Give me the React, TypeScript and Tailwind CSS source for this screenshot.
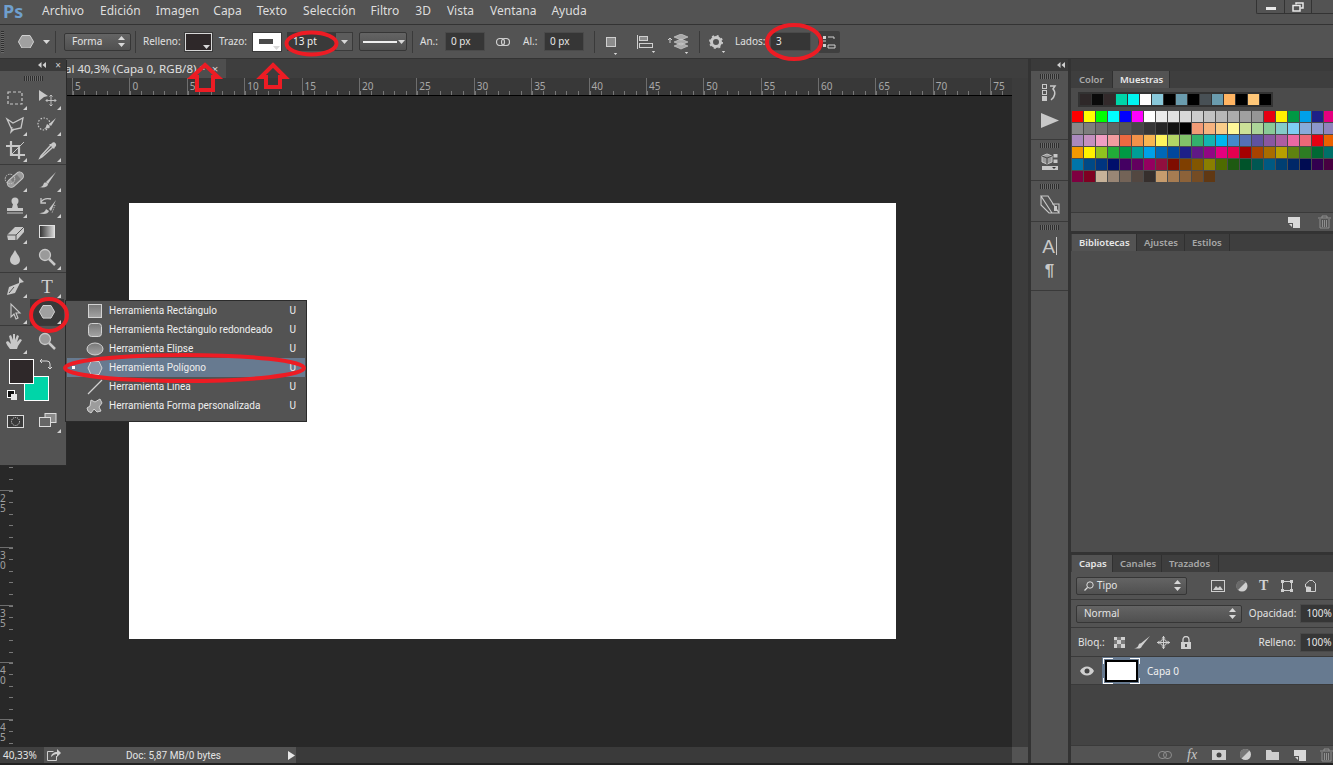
import React from 'react';

const menus = [
  ['Archivo', 'ml-[18px]'],
  ['Edición', 'ml-[16px]'],
  ['Imagen', 'ml-[15px]'],
  ['Capa', 'ml-[14px]'],
  ['Texto', 'ml-[15px]'],
  ['Selección', 'ml-[16px]'],
  ['Filtro', 'ml-[15px]'],
  ['3D', 'ml-[16px]'],
  ['Vista', 'ml-[16px]'],
  ['Ventana', 'ml-[16px]'],
  ['Ayuda', 'ml-[15px]'],
];

const recent = ['#2e2829', '#0a0a0a', '#332a2b', '#00d5a8', '#00f5f0', '#ffffff', '#88c8da', '#000000', '#6a9cae', '#000000', '#485055', '#6a9cae', '#ffb462', '#000000', '#ffc778', '#000000'];

const swatches = [
  ['#ff0000', '#ffff00', '#00ff00', '#00ffff', '#0000ff', '#ff00ff', '#ffffff', '#ebebeb', '#e1e1e1', '#d7d7d7', '#cccccc', '#c2c2c2', '#b7b7b7', '#acacac', '#a0a0a0', '#959595', '#e60012', '#fff100', '#009944', '#00a0e9', '#1d2088', '#e4007f'],
  ['#898989', '#7d7d7d', '#707070', '#626262', '#555555', '#464646', '#363636', '#262626', '#111111', '#000000', '#f29b76', '#f6b37f', '#facd89', '#fff799', '#cce198', '#acd598', '#89c997', '#84ccc9', '#7ecef4', '#88abda', '#8c97cb', '#8f82bc'],
  ['#aa89bd', '#c490bf', '#f19ec2', '#f29c9f', '#ec6941', '#f19149', '#f8b551', '#fff45c', '#b3d465', '#80c269', '#32b16c', '#13b5b1', '#00b7ee', '#448aca', '#556fb5', '#5f52a0', '#8957a1', '#ae5da1', '#ea68a2', '#eb6877', '#e60012', '#eb6100'],
  ['#f39800', '#fff100', '#8fc31f', '#22ac38', '#009944', '#009e96', '#00a0e9', '#0068b7', '#00479d', '#1d2088', '#601986', '#920783', '#e4007f', '#e5004f', '#a40000', '#a84200', '#a86c00', '#b8a000', '#5f8210', '#2d7d23', '#006934', '#007069'],
  ['#0075a9', '#004986', '#003580', '#000f6b', '#440062', '#63005f', '#950060', '#910f3e', '#7f0d00', '#7f3f00', '#825600', '#897f00', '#4e6b00', '#1e5a12', '#00532a', '#005752', '#005982', '#003f72', '#002868', '#000c52', '#32004f', '#470040'],
  ['#7e0040', '#7f0021', '#c7b299', '#998675', '#736357', '#534741', '#362f2d', '#c69c6d', '#a67c52', '#8c6239', '#754c24', '#603813'],
];

const rulerLabels = ['5', '0', '5', '10', '15', '20', '25', '30', '35', '40', '45', '50', '55', '60', '65', '70', '75'];
// the upper part of the side ruler lies under the toolbar, so it has no labels
const sideLabels = ['', '', '', '', '', '', '', '2\n5', '3\n0', '3\n5', '4\n0', '4\n5'];

const flyout = [
  ['Herramienta Rectángulo', 'rect'],
  ['Herramienta Rectángulo redondeado', 'round'],
  ['Herramienta Elipse', 'ellipse'],
  ['Herramienta Polígono', 'poly'],
  ['Herramienta Línea', 'line'],
  ['Herramienta Forma personalizada', 'custom'],
];

const Ico = ({ w = 22, h = 22, children, className = '' }: { w?: number; h?: number; children: React.ReactNode; className?: string }) => (
  <svg width={w} height={h} viewBox={`0 0 ${w} ${h}`} fill="none" className={`shrink-0 ${className}`}>
    {children}
  </svg>
);

const Caret = ({ className = '' }: { className?: string }) => (
  <svg width="7" height="4" viewBox="0 0 7 4" className={`shrink-0 ${className}`}>
    <path d="M0 0h7L3.5 4z" fill="#d8d8d8" />
  </svg>
);

const UpDown = () => (
  <svg width="7" height="11" viewBox="0 0 7 11" className="shrink-0">
    <path d="M3.5 0L7 4H0zM3.5 11L0 7h7z" fill="#d8d8d8" />
  </svg>
);

const Grip = ({ w }: { w: string }) => (
  <div className={`h-[5px] ${w} bg-[repeating-linear-gradient(to_right,#2e2e2e_0,#2e2e2e_1px,#6a6a6a_1px,#6a6a6a_2px)]`} />
);

const Collapse = () => (
  <svg width="8" height="6" viewBox="0 0 8 6">
    <path d="M3.5 0v6L0 3zM8 0v6L4.5 3z" fill="#d0d0d0" />
  </svg>
);

const Hex = ({ s = 16 }: { s?: number }) => (
  <svg width={s} height={s * 0.85} viewBox="0 0 16 13.6" className="shrink-0">
    <path d="M4 .5h8l3.6 6.3L12 13.1H4L.4 6.8z" fill="#a0a0a0" stroke="#d2d2d2" />
  </svg>
);

const Select = ({ label, className }: { label: React.ReactNode; className: string }) => (
  <div className={`flex items-center justify-between rounded-[2px] border border-[#363636] bg-gradient-to-b from-[#646464] to-[#505050] pl-[7px] pr-[5px] text-[#e4e4e4] ${className}`}>
    <span className="flex items-center gap-[3px]">{label}</span>
    <UpDown />
  </div>
);

const Input = ({ value, className }: { value: string; className: string }) => (
  <div className={`flex h-[19px] items-center border border-[#4a4a4a] bg-[#363636] pl-[5px] text-[#e6e6e6] ${className}`}>{value}</div>
);

const ToolCell = ({ children, more = true, active = false }: { children: React.ReactNode; more?: boolean; active?: boolean }) => (
  <div className={`relative flex h-[26px] items-center justify-center ${active ? 'bg-[#383838]' : ''}`}>
    {children}
    {more && <span className="absolute bottom-[1px] right-[3px] h-0 w-0 border-b-[4px] border-l-[4px] border-b-[#cfcfcf] border-l-transparent" />}
  </div>
);

const c = '#c8c8c8';
const cols = 'grid grid-cols-[30px_34px]';

const Toolbar = () => (
  <div className="absolute left-0 top-[59px] flex h-[406px] w-[66px] flex-col bg-[#535353] shadow-[1px_1px_0_#2a2a2a]">
    <div className="flex h-[12px] items-center justify-end gap-[9px] bg-[#3a3a3a] pr-[5px]">
      <Collapse />
      <span className="text-[10px] leading-none text-[#d0d0d0]">×</span>
    </div>
    <div className="flex h-[14px] items-center justify-center">
      <Grip w="w-[19px]" />
    </div>
    <div className={`${cols} border-b border-[#3a3a3a] pb-[1px]`}>
      <ToolCell><Ico><rect x="4" y="5" width="14" height="12" stroke={c} strokeWidth="1.2" strokeDasharray="3 2" /></Ico></ToolCell>
      <ToolCell><Ico><path d="M3 3l9 6-4 1-5 4z" fill={c} /><path d="M15 8v11M10 13.5h10M13.5 9.5L15 8l1.5 1.5M13.5 17.5L15 19l1.5-1.5M11.5 12L10 13.5l1.5 1.5M18.5 12l1.500 1.500-1.500 1.500" stroke={c} strokeWidth="0.9" /></Ico></ToolCell>
      <ToolCell><Ico><path d="M3 6l6 4 10-5-2 10-9 2-5-11z" stroke={c} strokeWidth="1.3" /><path d="M8 14l-1 5 3-3" stroke={c} strokeWidth="1.3" /></Ico></ToolCell>
      <ToolCell><Ico><circle cx="8" cy="11" r="6" stroke={c} strokeWidth="1.2" strokeDasharray="1.500 1.500" /><path d="M20 5l-7 6 2 2z" fill={c} /><path d="M8 16c3 0 5-1 6-3l-3-2c-1 2-1 4-3 5z" fill={c} /></Ico></ToolCell>
      <ToolCell><Ico><path d="M7 2v14h14M2 7h13v13" stroke={c} strokeWidth="2.200" /><path d="M8 15L20 3" stroke={c} strokeWidth="1" /></Ico></ToolCell>
      <ToolCell><Ico><path d="M15 6l-10 11-1 2 2-1L17 8" stroke={c} strokeWidth="1.500" /><path d="M13 5l5 5 1-2 1-1c1-2-2-5-4-3l-1 1z" fill={c} /></Ico></ToolCell>
    </div>
    <div className={`${cols} pt-[2px]`}>
      <ToolCell><Ico><g transform="rotate(-42 11 11)"><rect x="2" y="7" width="19" height="8" rx="4" fill="#9a9a9a" stroke={c} /><rect x="8" y="8" width="8" height="6" fill="#7a7a7a" /></g><circle cx="6" cy="10" r="4.800" stroke={c} strokeDasharray="1.500 1" /></Ico></ToolCell>
      <ToolCell><Ico><path d="M20 3L10 13l2 2z" fill={c} /><path d="M3 18c4 0 4-2 5-4 2-1 3 0 4 1 0 3-4 4-9 3z" fill={c} /></Ico></ToolCell>
      <ToolCell><Ico><circle cx="11" cy="6" r="3.500" fill={c} /><path d="M9 9h4l1 4H8z" fill={c} /><path d="M3 13h16v3H3z" fill={c} /><path d="M3 18h16" stroke={c} /></Ico></ToolCell>
      <ToolCell><Ico><path d="M5 7c2-3 6-4 10-3" stroke={c} strokeWidth="1.300" /><path d="M5 3v5h5" stroke={c} strokeWidth="1.300" /><path d="M20 5l-7 9 2 2z" fill={c} /><path d="M3 18c4 0 6-1 7-4l3 2c-1 3-5 4-10 2z" fill={c} /><path d="M19 10l-3 8" stroke={c} strokeDasharray="1 1" /></Ico></ToolCell>
      <ToolCell><Ico><path d="M3 14l8-8h9v5l-7 8H4z" fill={c} /><path d="M3 14h9l8-8M12 14v5" stroke="#535353" /></Ico></ToolCell>
      <ToolCell more={false}><Ico><defs><linearGradient id="tg"><stop offset="0" stopColor="#2e2e2e" /><stop offset="1" stopColor="#dcdcdc" /></linearGradient></defs><rect x="3.500" y="4.500" width="15" height="12" fill="url(#tg)" stroke="#e0e0e0" /></Ico></ToolCell>
      <ToolCell><Ico><path d="M11 3c2 4 5 7 5 10a5 5 0 01-10 0c0-3 3-6 5-10z" fill={c} /></Ico></ToolCell>
      <ToolCell><Ico><circle cx="9" cy="8" r="5.500" fill="#9a9a9a" stroke={c} strokeWidth="1.300" /><path d="M13 12l6 6" stroke={c} strokeWidth="2.500" /></Ico></ToolCell>
    </div>
    <div className="mt-[1px] border-t border-[#3a3a3a]">
      <div className={`${cols} border-b border-[#3a3a3a]`}>
        <ToolCell><Ico><path d="M15 2l5 5-4 1-5 10-8 2 2-8L15 8z" fill={c} /><path d="M5 18l5-6" stroke="#535353" /></Ico></ToolCell>
        <ToolCell><span className="font-['Liberation_Serif',serif] text-[19px] leading-none text-[#d2d2d2]">T</span></ToolCell>
        <ToolCell><Ico><path d="M7 3v13l3-3 2 5 2-1-2-5h4z" fill="#535353" stroke={c} strokeWidth="1.100" /></Ico></ToolCell>
        <ToolCell active><Hex /></ToolCell>
      </div>
      <div className={`${cols} pt-[3px]`}>
        <ToolCell><Ico><path d="M6 18c-2-3-4-5-4-7l2-1 3 3-2-8 2-1 2 5V3h2v6l2-5 2 1-2 6 3-3 2 1-4 6-1 3z" fill={c} /></Ico></ToolCell>
        <ToolCell more={false}><Ico><circle cx="9" cy="8" r="5.500" fill="#9a9a9a" stroke={c} strokeWidth="1.300" /><path d="M13 12l6 6" stroke={c} strokeWidth="2.500" /></Ico></ToolCell>
      </div>
    </div>
    <div className="relative h-[51px]">
      <div className="absolute left-[24px] top-[21px] h-[25px] w-[25px] border border-white bg-[#00d5a8]" />
      <div className="absolute left-[9px] top-[4px] h-[25px] w-[25px] border border-white bg-[#2e2829]" />
      <svg width="13" height="13" viewBox="0 0 13 13" className="absolute left-[39px] top-[3px]">
        <path d="M1 3h7a3 3 0 013 3v5M3 1L1 3l2 2M9 9l2 2 2-2" stroke="#d8d8d8" fill="none" />
      </svg>
      <div className="absolute left-[8px] top-[36px] h-[6px] w-[6px] bg-[#111] outline outline-1 outline-white" />
      <div className="absolute left-[11px] top-[39px] h-[6px] w-[6px] bg-[#e8e8e8]" />
    </div>
    <div className={`${cols} pt-[2px]`}>
      <ToolCell more={false}><Ico><rect x="3.500" y="5.500" width="16" height="12" fill="#3a3a3a" stroke="#dcdcdc" /><circle cx="11.500" cy="11.500" r="4" stroke="#e8e8e8" strokeDasharray="1 1" /></Ico></ToolCell>
      <ToolCell><Ico><rect x="9" y="3.500" width="11" height="9" fill="#8a8a8a" stroke="#dcdcdc" /><rect x="3.500" y="7.500" width="11" height="9" fill="#666" stroke="#dcdcdc" /></Ico></ToolCell>
    </div>
  </div>
);

const ShapeIcon = ({ kind }: { kind: string }) => (
  <Ico w={18} h={18}>
    <defs><linearGradient id={`f${kind}`} x2="0" y2="1"><stop offset="0" stopColor="#777" /><stop offset="1" stopColor="#a4a4a4" /></linearGradient></defs>
    {kind === 'rect' && <rect x="2.500" y="2.500" width="13" height="13" fill={`url(#f${kind})`} stroke="#d2d2d2" />}
    {kind === 'round' && <rect x="2.500" y="2.500" width="13" height="13" rx="3" fill={`url(#f${kind})`} stroke="#d2d2d2" />}
    {kind === 'ellipse' && <ellipse cx="9" cy="9" rx="8" ry="6" fill={`url(#f${kind})`} stroke="#d2d2d2" />}
    {kind === 'poly' && <path d="M5 2.500h8L16 9l-3 6.500H5L2 9z" fill="#8a97a8" stroke="#d2d2d2" />}
    {kind === 'line' && <path d="M2 16L16 2" stroke="#d2d2d2" strokeWidth="1.300" />}
    {kind === 'custom' && <path d="M1 11l3-2 1-6 4 2 5-3 2 4-3 4 2 4-4 1-3-3-3 4-3-2z" fill="#9c9c9c" stroke="#d2d2d2" />}
  </Ico>
);

const Flyout = () => (
  <div className="absolute left-[65px] top-[300px] flex h-[122px] w-[242px] flex-col border border-[#2b2b2b] bg-[#535353] font-['Roboto',sans-serif]">
    {flyout.map(([label, kind]) => (
      <div key={kind} className={`flex h-[19px] items-center text-[10px] text-[#eeeeee] ${kind === 'poly' ? 'mx-[1px] bg-[#677a90]' : 'mx-[1px]'}`}>
        <span className="flex w-[8px] justify-end">{kind === 'poly' && <span className="h-[3px] w-[3px] bg-white" />}</span>
        <span className="ml-[11px] w-[20px]"><ShapeIcon kind={kind} /></span>
        <span className="ml-[3px] flex-1 whitespace-nowrap">{label}</span>
        <span className="mr-[9px]">U</span>
      </div>
    ))}
  </div>
);

const Marks = () => (
  <svg width="1333" height="765" viewBox="0 0 1333 765" fill="none" className="pointer-events-none absolute left-0 top-0">
    <g stroke="#ed1c24" strokeWidth="4">
      <ellipse cx="49" cy="315" rx="18" ry="16" />
      <ellipse cx="184.500" cy="368" rx="119.500" ry="13" />
      <ellipse cx="311.500" cy="43.500" rx="25" ry="11" />
      <ellipse cx="794" cy="42" rx="27" ry="17" />
      <path d="M205 65l13 12h-5v13h-16V77h-5z" />
      <path d="M273 65l12 12h-5v10h-14V77h-5z" />
    </g>
  </svg>
);

const DockGroup = ({ children, className }: { children: React.ReactNode; className: string }) => (
  <div className={`flex flex-col items-center border-b border-[#3a3a3a] pt-[3px] ${className}`}>
    <Grip w="w-[19px]" />
    {children}
  </div>
);

const Dock = () => (
  <div className="flex w-[43px] shrink-0 border-x-[3px] border-[#333333] bg-[#535353]">
    <div className="flex w-full flex-col">
      <div className="flex h-[12px] items-center justify-center bg-[#3a3a3a] pl-[22px]"><Collapse /></div>
      <DockGroup className="h-[69px]">
        <Ico w={20} h={20} className="mt-[4px]">
          <rect x="2.500" y="1.500" width="4" height="4" stroke={c} /><rect x="2.500" y="7.500" width="4" height="4" stroke={c} /><rect x="2" y="13" width="5" height="5" fill={c} />
          <path d="M10 3h5l-2 3c3 3 2 8-2 11" stroke={c} strokeWidth="1.500" />
        </Ico>
        <svg width="18" height="15" viewBox="0 0 18 15" className="mt-[10px]"><path d="M0 0l18 7.500L0 15z" fill={c} /></svg>
      </DockGroup>
      <DockGroup className="h-[41px]">
        <Ico w={20} h={20} className="mt-[4px]">
          <path d="M7 2l5 2v6l-5 2-5-2V4z" fill="#9a9a9a" stroke={c} /><path d="M7 6v6M2 4l5 2 5-2" stroke="#444" />
          <rect x="13.500" y="2" width="4" height="3.500" fill={c} /><rect x="13.500" y="7.500" width="4" height="3.500" fill={c} />
          <rect x="2" y="14" width="16" height="4" fill={c} /><path d="M12 15h4l-2 2z" fill="#333" />
        </Ico>
      </DockGroup>
      <DockGroup className="h-[41px]">
        <Ico w={20} h={20} className="mt-[6px]">
          <path d="M1 1h7l11 17h-7zM1 1v9l8 8h3M12 9h7v9" stroke={c} strokeWidth="1.100" />
          <rect x="14" y="11" width="3" height="5" fill={c} />
        </Ico>
      </DockGroup>
      <DockGroup className="h-[69px]">
        <div className="mt-[6px] flex h-[20px] items-center font-['Liberation_Sans',sans-serif] text-[19px] leading-none text-[#c8c8c8]">A<span className="ml-[1px] h-[18px] w-px bg-[#c8c8c8]" /></div>
        <div className="mt-[6px] font-['Liberation_Sans',sans-serif] text-[17px] font-bold leading-none text-[#c8c8c8]">¶</div>
      </DockGroup>
    </div>
  </div>
);

const Tab = ({ label, active = false, className = '' }: { label: string; active?: boolean; className?: string }) => (
  <div className={`flex h-[17px] items-center border-r border-[#303030] pt-[1px] text-[9.5px] font-semibold ${active ? 'bg-[#535353] text-[#e8e8e8]' : 'text-[#a8a8a8]'} ${className}`}>{label}</div>
);

const PanelFooterNew = () => (
  <Ico w={12} h={12}><path d="M0 1h12v11H5V7H0z" fill="#d8d8d8" /><path d="M1 8h3v3z" fill="#d8d8d8" /></Ico>
);

const Trash = () => (
  <Ico w={13} h={14}>
    <path d="M0 3h13M4 3V1h5v2M2 4v9h9V4M4.500 5v7M6.500 5v7M8.500 5v7" stroke="#8e8e8e" />
  </Ico>
);

const Panels = () => (
  <div className="flex min-w-0 flex-1 flex-col bg-[#333333] text-[10px]">
    <div className="h-[12px] shrink-0 bg-[#3a3a3a]" />
    <div className="flex h-[160px] shrink-0 flex-col bg-[#4b4b4b]">
      <div className="flex h-[17px] shrink-0 bg-[#3e3e3e] pl-[1px]">
        <Tab label="Color" className="w-[41px] pl-[7px]" />
        <Tab label="Muestras" active className="w-[57px] pl-[7px]" />
      </div>
      <div className="ml-[7px] mt-[4px] flex h-[15px] w-[195px] items-center gap-px bg-[#333333] px-[2px]">
        {recent.map((col, i) => <div key={i} className="h-[11px] w-[11px]" style={{ backgroundColor: col }} />)}
      </div>
      <div className="mt-[4px] flex flex-col gap-px pl-[1px]">
        {swatches.map((row, r) => (
          <div key={r} className="flex gap-px">
            {row.map((col, i) => <div key={i} className="h-[11px] w-[11px] shrink-0" style={{ backgroundColor: col }} />)}
          </div>
        ))}
      </div>
      <div className="mt-auto flex h-[19px] items-center justify-end gap-[18px] border-t border-[#3a3a3a] bg-[#535353] pr-[2px]">
        <PanelFooterNew />
        <Trash />
      </div>
    </div>
    <div className="mt-[3px] flex h-[318px] shrink-0 flex-col bg-[#4d4d4d]">
      <div className="flex h-[17px] shrink-0 bg-[#3e3e3e] pl-[1px]">
        <Tab label="Bibliotecas" active className="w-[65px] pl-[7px]" />
        <Tab label="Ajustes" className="w-[48px] pl-[7px]" />
        <Tab label="Estilos" className="w-[45px] pl-[7px]" />
      </div>
    </div>
    <div className="mt-[3px] flex flex-1 flex-col bg-[#535353] text-[#e4e4e4]">
      <div className="flex h-[17px] shrink-0 bg-[#3e3e3e] pl-[1px]">
        <Tab label="Capas" active className="w-[41px] pl-[7px]" />
        <Tab label="Canales" className="w-[49px] pl-[7px]" />
        <Tab label="Trazados" className="w-[57px] pl-[7px]" />
      </div>
      <div className="flex h-[28px] items-center border-b border-[#3a3a3a] pl-[5px]">
        <Select className="h-[18px] w-[111px]" label={<><svg width="10" height="10" viewBox="0 0 10 10" fill="none"><circle cx="6" cy="4" r="3.200" stroke="#dcdcdc" /><path d="M3.500 6.500L.5 9.500" stroke="#dcdcdc" strokeWidth="1.300" /></svg>Tipo</>} />
        <Ico w={14} h={12} className="ml-[24px]"><rect x=".5" y=".5" width="13" height="11" stroke="#cfcfcf" /><path d="M2 10l3-4 2 2 2-2 3 4z" fill="#cfcfcf" /></Ico>
        <Ico w={12} h={12} className="ml-[11px]"><circle cx="6" cy="6" r="5.500" fill="#cfcfcf" /><path d="M6 .5a5.500 5.500 0 00-4 9.500L10 2A5.500 5.500 0 006 .5z" fill="#6a6a6a" /></Ico>
        <span className="ml-[11px] font-['Liberation_Serif',serif] text-[14px] font-bold leading-none text-[#d2d2d2]">T</span>
        <Ico w={12} h={12} className="ml-[13px]"><rect x="1.500" y="1.500" width="9" height="9" stroke="#cfcfcf" /><path d="M0 0h3v3H0zM9 0h3v3H9zM0 9h3v3H0zM9 9h3v3H9z" fill="#cfcfcf" /></Ico>
        <Ico w={11} h={12} className="ml-[12px]"><path d="M4.500.5h3l3 3v8h-6V7H.5V4z" stroke="#cfcfcf" /><path d="M1 7h5v5H1z" fill="#cfcfcf" /></Ico>
      </div>
      <div className="flex h-[28px] items-center border-b border-[#3a3a3a] pl-[5px]">
        <Select className="h-[18px] w-[168px]" label="Normal" />
        <span className="ml-[7px]">Opacidad:</span>
        <Input value="100%" className="ml-[4px] w-[33px] border-r-0" />
      </div>
      <div className="flex h-[29px] items-center border-b border-[#3a3a3a] pl-[7px]">
        <span>Bloq.:</span>
        <div className="ml-[9px] grid h-[11px] w-[11px] grid-cols-3 grid-rows-3 bg-[#d0d0d0]">
          {[0, 1, 2, 3, 4, 5, 6, 7, 8].map(i => <span key={i} className={i % 2 ? 'bg-[#7a7a7a]' : ''} />)}
        </div>
        <Ico w={16} h={13} className="ml-[9px]"><path d="M16 0L6 8l2 2z" fill="#d0d0d0" /><path d="M0 12c4 0 4-2 5-4 2-1 3 0 3 2-1 3-4 3-8 2z" fill="#d0d0d0" /></Ico>
        <Ico w={13} h={13} className="ml-[7px]"><path d="M6.500 0v13M0 6.500h13" stroke="#d0d0d0" /><path d="M6.500 0l2 2.500h-4zM6.500 13l2-2.500h-4zM0 6.500l2.500-2v4zM13 6.500l-2.500-2v4z" fill="#d0d0d0" /><circle cx="6.500" cy="6.500" r="3" stroke="#d0d0d0" /></Ico>
        <Ico w={12} h={13} className="ml-[10px]"><path d="M3 6V3.500a3 3 0 016 0V6" stroke="#d0d0d0" strokeWidth="1.300" /><rect x="1" y="6" width="10" height="7" fill="#d0d0d0" /><rect x="5" y="8" width="2" height="3" fill="#555" /></Ico>
        <span className="ml-auto">Relleno:</span>
        <Input value="100%" className="ml-[4px] w-[33px] border-r-0" />
      </div>
      <div className="flex h-[28px] border-b border-[#3a3a3a] bg-[#677a90]">
        <div className="flex w-[31px] items-center justify-center bg-[#535353]">
          <Ico w={14} h={10}><path d="M0 5c3-6 11-6 14 0-3 6-11 6-14 0z" fill="#cfcfcf" /><circle cx="7" cy="5" r="2.500" fill="#444" /></Ico>
        </div>
        <div className="relative ml-[1px] h-[26px] w-[37px] self-center">
          <div className="absolute inset-x-[2px] inset-y-[2px] border-2 border-black bg-white" />
          <span className="absolute left-0 top-0 h-[6px] w-[10px] border-l border-t border-white" />
          <span className="absolute right-0 top-0 h-[6px] w-[10px] border-r border-t border-white" />
          <span className="absolute bottom-0 left-0 h-[6px] w-[10px] border-b border-l border-white" />
          <span className="absolute bottom-0 right-0 h-[6px] w-[10px] border-b border-r border-white" />
        </div>
        <span className="ml-[7px] mt-[2px] self-center text-[#f0f0f0]">Capa 0</span>
      </div>
      <div className="flex-1 bg-[#434343]" />
      <div className="flex h-[18px] items-center border-t border-[#3a3a3a] bg-[#535353] pl-[87px]">
        <Ico w={14} h={8}><rect x=".5" y=".5" width="8" height="7" rx="3.500" stroke="#8e8e8e" /><rect x="5.500" y=".5" width="8" height="7" rx="3.500" stroke="#8e8e8e" /></Ico>
        <span className="ml-[15px] w-[13px] font-['Liberation_Serif',serif] text-[14px] italic leading-none text-[#c8c8c8]">fx</span>
        <Ico w={14} h={10} className="ml-[13px]"><rect width="14" height="10" fill="#cfcfcf" /><circle cx="7" cy="5" r="2.500" fill="#444" /></Ico>
        <Ico w={11} h={11} className="ml-[14px]"><circle cx="5.500" cy="5.500" r="5.500" fill="#cfcfcf" /><path d="M5.500 0a5.500 5.500 0 00-4 9.500l8-8A5.500 5.500 0 005.500 0z" fill="#777" /></Ico>
        <Ico w={13} h={10} className="ml-[15px]"><path d="M0 0h5l1 2h7v8H0z" fill="#cfcfcf" /></Ico>
        <span className="ml-[15px]"><PanelFooterNew /></span>
        <span className="ml-[14px]"><Trash /></span>
      </div>
    </div>
  </div>
);

export default function App() {
  return (
    <div className="relative flex h-[765px] w-[1333px] flex-col overflow-hidden bg-[#535353] font-['Noto_Sans',sans-serif] text-[11px] text-[#e0e0e0]">
      {/* menu */}
      <div className="flex h-[25px] shrink-0 border-b border-[#333333]">
        <div className="ml-[3px] w-[21px] text-[18px] font-bold leading-[23px] text-[#6f9fcd]">Ps</div>
        <div className="flex items-center pb-[2px] text-[12px] leading-none text-[#dedede]">
          {menus.map(([label, ml]) => <span key={label} className={ml}>{label}</span>)}
        </div>
        <div className="ml-auto flex h-[14px] overflow-hidden rounded-bl-[2px] border-b border-l border-[#333333]">
          <div className="flex w-[28px] items-center justify-center border-r border-[#333333]"><span className="mt-[3px] h-[3px] w-[10px] bg-[#e8e8e8]" /></div>
          <div className="flex w-[27px] items-center justify-center border-r border-[#333333]">
            <svg width="12" height="10" viewBox="0 0 12 10" fill="none"><path d="M4 2.500V1h7v5H8.500" stroke="#e8e8e8" strokeWidth="1.500" /><rect x="1" y="3.500" width="7" height="5.500" stroke="#e8e8e8" strokeWidth="1.500" /></svg>
          </div>
          <div className="w-[21px]" />
        </div>
      </div>

      {/* options */}
      <div className="flex h-[34px] shrink-0 items-center border-b border-[#333333] text-[10px] text-[#e0e0e0]">
        <div className="ml-[1px] h-[22px] w-[3px] bg-[repeating-linear-gradient(to_bottom,#2e2e2e_0,#2e2e2e_1px,#6a6a6a_1px,#6a6a6a_2px)]" />
        <div className="ml-[14px]"><Hex /></div>
        <Caret className="ml-[9px]" />
        <div className="ml-[5px] h-[22px] w-px bg-[#3a3a3a]" />
        <Select className="ml-[8px] h-[18px] w-[67px]" label="Forma" />
        <div className="ml-[4px] h-[22px] w-px bg-[#3a3a3a]" />
        <span className="ml-[7px] w-[42px]">Relleno:</span>
        <div className="relative h-[18px] w-[27px] border border-[#d8d8d8] bg-[#2e2829] outline outline-1 outline-[#3a3a3a]"><Caret className="absolute bottom-[1px] right-[1px]" /></div>
        <span className="ml-[7px] w-[34px]">Trazo:</span>
        <div className="relative flex h-[18px] w-[28px] items-center justify-center bg-white outline outline-1 outline-[#3a3a3a]">
          <span className="mb-[1px] mr-[2px] h-[5px] w-[14px] bg-[#4a4a4a]" />
          <Caret className="absolute bottom-[1px] right-[1px]" />
        </div>
        <div className="ml-[6px] flex h-[19px] w-[66px] border border-[#3a3a3a]">
          <div className="flex w-[48px] items-center bg-[#3a3a3a] pl-[5px] text-[#f0f0f0]">13 pt</div>
          <div className="flex flex-1 items-center justify-center bg-[#5c5c5c]"><Caret /></div>
        </div>
        <div className="ml-[6px] flex h-[19px] w-[48px] items-center gap-[1px] rounded-[2px] border border-[#363636] bg-gradient-to-b from-[#646464] to-[#505050] pl-[3px]">
          <span className="h-[2px] w-[34px] bg-[#f0f0f0]" />
          <Caret />
        </div>
        <div className="ml-[5px] h-[22px] w-px bg-[#3a3a3a]" />
        <span className="ml-[7px] w-[25px]">An.:</span>
        <Input value="0 px" className="w-[40px]" />
        <Ico w={14} h={8} className="ml-[11px]"><rect x=".5" y=".5" width="8" height="7" rx="3.500" stroke="#cfcfcf" strokeWidth="1.200" /><rect x="5.500" y=".5" width="8" height="7" rx="3.500" stroke="#cfcfcf" strokeWidth="1.200" /></Ico>
        <span className="ml-[13px] w-[21px]">Al.:</span>
        <Input value="0 px" className="w-[40px]" />
        <div className="ml-[10px] h-[22px] w-px bg-[#3a3a3a]" />
        <div className="relative ml-[11px] h-[10px] w-[10px] border border-[#cfcfcf] bg-[#8c8c8c]"><Caret className="absolute -bottom-[10px] -right-[4px] scale-50" /></div>
        <div className="relative ml-[21px]">
          <Ico w={18} h={14}><path d="M.5 0v14" stroke="#cfcfcf" /><rect x="2.500" y="1.500" width="8" height="4" fill="#8c8c8c" stroke="#cfcfcf" /><rect x="2.500" y="8.500" width="13" height="4" fill="#555" stroke="#cfcfcf" /></Ico>
          <Caret className="absolute -bottom-[5px] -right-[2px] scale-50" />
        </div>
        <div className="relative ml-[13px]">
          <Ico w={20} h={16}><path d="M0 6l2-2 2 2M2 4v5" stroke="#cfcfcf" /><path d="M13 0l7 3-7 3-7-3zM13 5l7 3-7 3-7-3zM13 9l7 3-7 3-7-3z" fill="#a8a8a8" stroke="#d4d4d4" strokeWidth=".6" /></Ico>
          <Caret className="absolute -bottom-[5px] -right-[2px] scale-50" />
        </div>
        <div className="ml-[11px] h-[22px] w-px bg-[#3a3a3a]" />
        <div className="relative ml-[9px]">
          <Ico w={14} h={14}><circle cx="7" cy="7" r="4.500" stroke="#c8c8c8" strokeWidth="3" /><circle cx="7" cy="7" r="6" stroke="#c8c8c8" strokeWidth="2" strokeDasharray="2 2.710" /></Ico>
          <Caret className="absolute -bottom-[5px] -right-[4px] scale-50" />
        </div>
        <span className="ml-[12px] w-[35px]">Lados:</span>
        <Input value="3" className="w-[41px]" />
        <div className="ml-[7px] flex h-[22px] w-[22px] items-center justify-center rounded-[2px] bg-[#3f3f3f]">
          <Ico w={14} h={14}><path d="M1 1h3v3H1zM1 9h3v3H1z" fill="#d0d0d0" /><path d="M6 2h6v2M1 6h3M6 10h7v3H6z" stroke="#d0d0d0" /></Ico>
        </div>
      </div>

      {/* main */}
      <div className="flex h-[704px] shrink-0">
        <div className="flex w-[1028px] shrink-0 flex-col">
          <div className="flex h-[19px] shrink-0 bg-[#3e3e3e]">
            <div className="ml-[66px] flex w-[160px] items-center overflow-hidden whitespace-nowrap bg-[#4e4e4e] text-[11.5px] text-[#e0e0e0]">
              <span className="ml-[-1px]">al 40,3% (Capa 0, RGB/8) *</span>
              <span className="ml-[6px] text-[#cfcfcf]">×</span>
            </div>
          </div>
          <div className="flex min-h-0 flex-1">
            <div className="flex w-[1012px] shrink-0 flex-col">
              <div className="flex h-[18px] shrink-0 overflow-hidden border-b border-black bg-[#383838]">
                <div className="w-[72px] shrink-0" />
                {rulerLabels.map((n, i) => (
                  <div key={i} className="h-full w-[57.4px] shrink-0 border-l border-[#6e6e6e] bg-[repeating-linear-gradient(to_right,#777777_0,#777777_1px,transparent_1px,transparent_11.48px)] bg-[length:100%_4px] bg-bottom bg-no-repeat pl-[2px] text-[10px] leading-[16px] text-[#a8a8a8]">{n}</div>
                ))}
              </div>
              <div className="flex min-h-0 flex-1 bg-[#282828]">
                <div className="h-full w-[13px] shrink-0 overflow-hidden">
                  <div className="-mt-[8px] flex flex-col">
                    {sideLabels.map((n, i) => (
                      <div key={i} className="h-[57.4px] w-[13px] shrink-0 whitespace-pre-line border-t border-[#6e6e6e] bg-[repeating-linear-gradient(to_bottom,#777777_0,#777777_1px,transparent_1px,transparent_11.48px)] bg-[length:4px_100%] bg-right bg-no-repeat pt-[2px] text-[10px] leading-[10px] text-[#a0a0a0]">{n}</div>
                    ))}
                  </div>
                </div>
                <div className="flex-1 pl-[116px] pt-[107px]">
                  <div className="h-[436px] w-[767px] bg-white" />
                </div>
              </div>
              <div className="flex h-[16px] shrink-0 items-center">
                <div className="flex h-full w-[44px] items-center bg-[#3f3f3f] pl-[3px] text-[10px] text-[#e4e4e4]">40,33%</div>
                <div className="flex h-full w-[252px] items-center bg-[#535353] pl-[3px] font-['Roboto',sans-serif] text-[10px] text-[#e4e4e4]">
                  <Ico w={14} h={12}><path d="M.5 2.500h6M.5 2.500v9h9V7" stroke="#cfcfcf" /><path d="M4 8c0-3 3-5 6-5V0l4 4-4 4V5C8 5 6 6 4 8z" fill="#cfcfcf" /></Ico>
                  <span className="ml-[65px] w-[162px]">Doc: 5,87 MB/0 bytes</span>
                  <svg width="7" height="9" viewBox="0 0 7 9"><path d="M0 0l7 4.500L0 9z" fill="#e8e8e8" /></svg>
                </div>
                <div className="h-full flex-1 bg-[#3a3a3a]" />
              </div>
            </div>
            <div className="flex w-[16px] shrink-0 flex-col">
              <div className="flex-1 bg-[#3c3c3c]" />
              <div className="h-[16px] bg-[#535353]" />
            </div>
          </div>
        </div>
        <Dock />
        <Panels />
      </div>
      <div className="h-[2px] shrink-0 bg-[#222222]" />

      <Toolbar />
      <Flyout />
      <Marks />
    </div>
  );
}
